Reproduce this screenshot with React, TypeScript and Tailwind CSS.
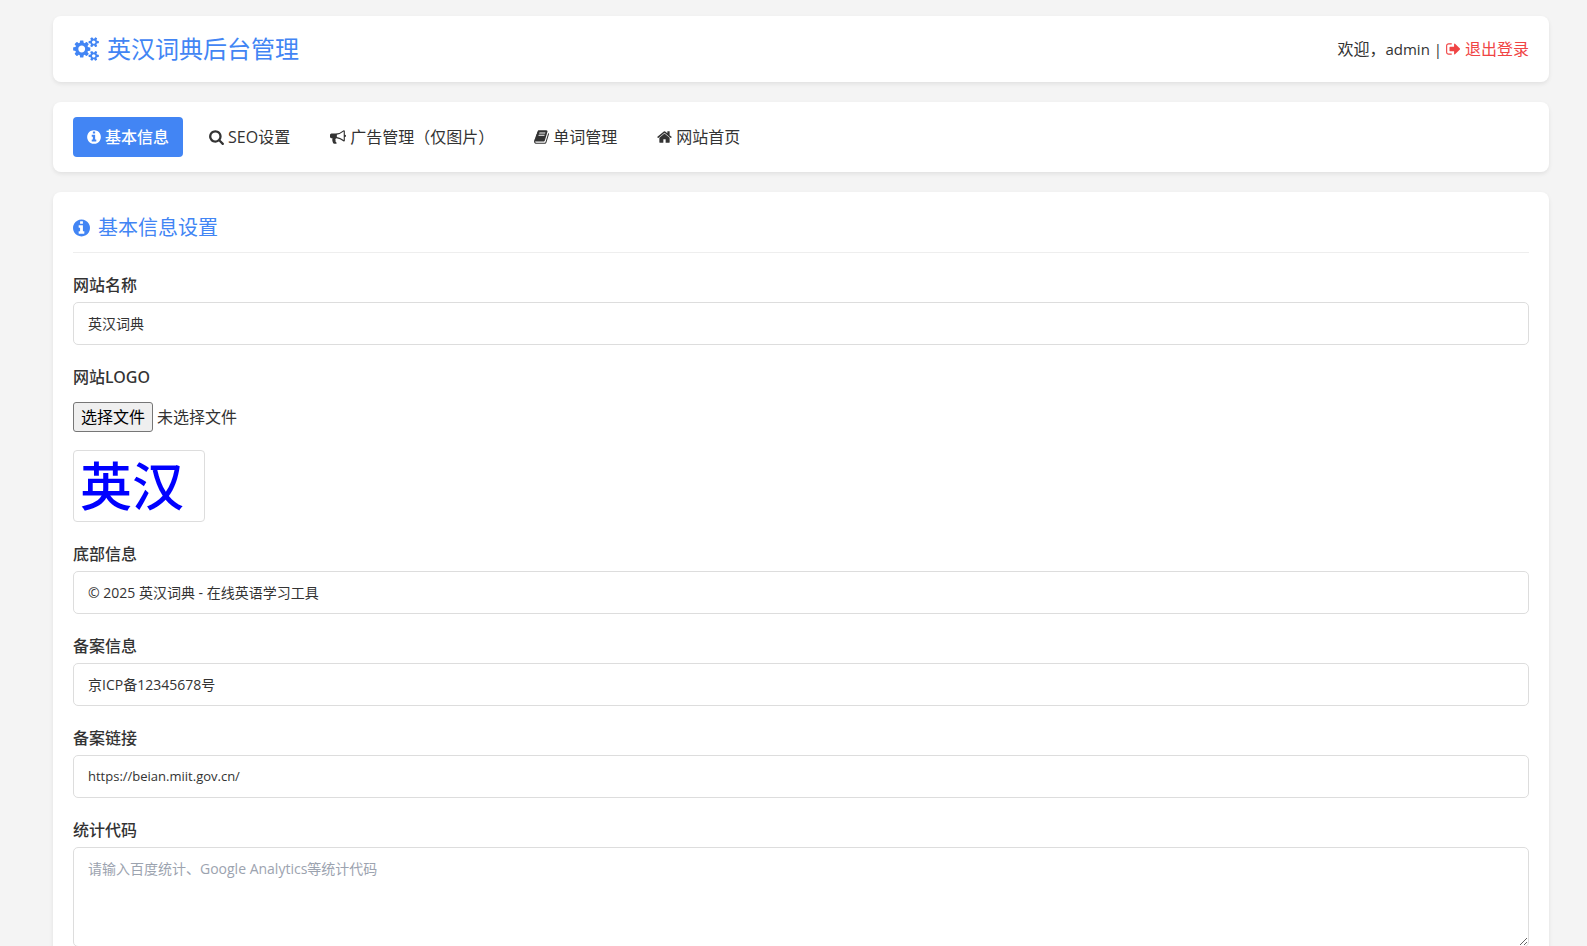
import React, { useState } from 'react';

interface IconProps {
  name: keyof typeof ICONS;
  className: string;
}

const ICONS = {
  cogs: {
    viewBox: '-64 0 1920 1792',
    path: 'M832 896q0-106-75-181t-181-75-181 75-75 181 75 181 181 75 181-75 75-181zm768 512q0-52-38-90t-90-38-90 38-38 90q0 53 37.5 90.5t90.5 37.5 90.5-37.5 37.5-90.5zm0-1024q0-52-38-90t-90-38-90 38-38 90q0 53 37.5 90.5t90.5 37.5 90.5-37.5 37.5-90.5zm-384 421v185q0 10-7 19.5t-16 10.5l-155 24q-11 35-32 76 34 48 90 115 7 11 7 20 0 12-7 19-23 30-82.5 89.5t-78.5 59.5q-11 0-21-7l-115-90q-37 19-77 31-11 108-23 155-7 24-30 24h-186q-11 0-20-7.5t-10-17.5l-23-153q-34-10-75-31l-118 89q-7 7-20 7-11 0-21-8-144-133-144-160 0-9 7-19 10-14 41-53t47-61q-23-44-35-82l-152-24q-10-1-17-9.5t-7-19.5v-185q0-10 7-19.5t16-10.5l155-24q11-35 32-76-34-48-90-115-7-11-7-20 0-12 7-20 22-30 82-89t79-59q11 0 21 7l115 90q34-18 77-32 11-108 23-154 7-24 30-24h186q11 0 20 7.5t10 17.5l23 153q34 10 75 31l118-89q8-7 20-7 11 0 21 8 144 133 144 160 0 8-7 19-12 16-42 54t-45 60q23 48 34 82l152 23q10 2 17 10.5t7 19.5zm640 533v140q0 16-149 31-12 27-30 52 51 113 51 138 0 4-4 7-122 71-124 71-8 0-46-47t-52-68q-20 2-30 2t-30-2q-14 21-52 68t-46 47q-2 0-124-71-4-3-4-7 0-25 51-138-18-25-30-52-149-15-149-31v-140q0-16 149-31 13-29 30-52-51-113-51-138 0-4 4-7 4-2 35-20t59-34 30-16q8 0 46 46.5t52 67.5q20-2 30-2t30 2q51-71 92-112l6-2q4 0 124 70 4 3 4 7 0 25-51 138 17 23 30 52 149 15 149 31zm0-1024v140q0 16-149 31-12 27-30 52 51 113 51 138 0 4-4 7-122 71-124 71-8 0-46-47t-52-68q-20 2-30 2t-30-2q-14 21-52 68t-46 47q-2 0-124-71-4-3-4-7 0-25 51-138-18-25-30-52-149-15-149-31v-140q0-16 149-31 13-29 30-52-51-113-51-138 0-4 4-7 4-2 35-20t59-34 30-16q8 0 46 46.5t52 67.5q20-2 30-2t30 2q51-71 92-112l6-2q4 0 124 70 4 3 4 7 0 25-51 138 17 23 30 52 149 15 149 31z',
  },
  info: {
    viewBox: '128 0 1536 1792',
    path: 'M1152 1376v-160q0-14-9-23t-23-9h-96v-512q0-14-9-23t-23-9h-320q-14 0-23 9t-9 23v160q0 14 9 23t23 9h96v320h-96q-14 0-23 9t-9 23v160q0 14 9 23t23 9h448q14 0 23-9t9-23zm-128-896v-160q0-14-9-23t-23-9h-192q-14 0-23 9t-9 23v160q0 14 9 23t23 9h192q14 0 23-9t9-23zm640 416q0 209-103 385.5t-279.5 279.5-385.5 103-385.5-103-279.5-279.5-103-385.5 103-385.5 279.5-279.5 385.5-103 385.5 103 279.5 279.5 103 385.5z',
  },
  search: {
    viewBox: '64 0 1664 1792',
    path: 'M1216 832q0-185-131.5-316.5t-316.5-131.5-316.5 131.5-131.5 316.5 131.5 316.5 316.5 131.5 316.5-131.5 131.5-316.5zm512 832q0 52-38 90t-90 38q-54 0-90-38l-343-342q-179 124-399 124-143 0-273.5-55.5t-225-150-150-225-55.5-273.5 55.5-273.5 150-225 225-150 273.5-55.5 273.5 55.5 225 150 150 225 55.5 273.5q0 220-124 399l343 343q37 37 37 90z',
  },
  bullhorn: {
    viewBox: '0 0 1792 1792',
    path: 'M1664 640q53 0 90.5 37.5t37.5 90.5-37.5 90.5-90.5 37.5v384q0 52-38 90t-90 38q-417-347-812-380-58 19-91 66t-31 100.5 40 92.5q-20 33-23 65.5t6 58 33.5 55 48 50 61.5 50.5q-29 58-111.5 83t-168.5 11.5-132-55.5q-7-23-29.5-87.5t-32-94.5-23-89-15-101 3.5-98.5 22-110.5h-122q-66 0-113-47t-47-113v-192q0-66 47-113t113-47h480q435 0 896-384 52 0 90 38t38 90v384zm-128 604v-954q-394 302-768 343v270q377 42 768 341z',
  },
  book: {
    viewBox: '64 0 1664 1792',
    path: 'M1703 478q40 57 18 129l-275 906q-19 64-76.5 107.5t-122.5 43.5h-923q-77 0-148.5-53.5t-99.5-131.5q-24-67-2-127 0-4 3-27t4-37q1-8-3-21.5t-3-19.5q2-11 8-21t16.5-23.5 16.5-23.5q23-38 45-91.5t30-91.5q3-10 .5-30t-.5-28q3-11 17-28t17-23q21-36 42-92t25-90q1-9-2.5-32t.5-28q4-13 22-30.5t22-22.5q19-26 42.5-84.5t27.5-96.5q1-8-3-25.5t-2-26.5q2-8 9-18t18-23 17-21q8-12 16.5-30.5t15-35 16-36 19.5-32 26.5-23.5 36-11.5 47.5 5.5l-1 3q38-9 51-9h761q74 0 114 56t18 130l-274 906q-36 119-71.5 153.5t-128.5 34.5h-869q-27 0-38 15-11 16-1 43 24 70 144 70h923q29 0 56-15.5t35-41.5l300-987q7-22 5-57 38 15 59 43zm-1064 2q-4 13 2 22.5t20 9.5h608q13 0 25.5-9.5t16.5-22.5l21-64q4-13-2-22.5t-20-9.5h-608q-13 0-25.5 9.5t-16.5 22.5zm-83 256q-4 13 2 22.5t20 9.5h608q13 0 25.5-9.5t16.5-22.5l21-64q4-13-2-22.5t-20-9.5h-608q-13 0-25.5 9.5t-16.5 22.5z',
  },
  home: {
    viewBox: '64 0 1664 1792',
    path: 'M1472 992v480q0 26-19 45t-45 19h-384v-384h-256v384h-384q-26 0-45-19t-19-45v-480q0-1 .5-3t.5-3l575-474 575 474q1 2 1 6zm223-69l-62 74q-8 9-21 11h-3q-13 0-21-7l-692-577-692 577q-12 8-24 7-13-2-21-11l-62-74q-8-10-7-23.5t11-21.5l719-599q32-26 76-26t76 26l244 204v-195q0-14 9-23t23-9h192q14 0 23 9t9 23v408l219 182q10 8 11 21.5t-7 23.5z',
  },
  signOut: {
    viewBox: '64 0 1664 1792',
    path: 'M704 1440q0 4 1 20t.5 26.5-3 23.5-10 19.5-20.5 6.5h-320q-119 0-203.5-84.5t-84.5-203.5v-704q0-119 84.5-203.5t203.5-84.5h320q13 0 22.5 9.5t9.5 22.5q0 4 1 20t.5 26.5-3 23.5-10 19.5-20.5 6.5h-320q-66 0-113 47t-47 113v704q0 66 47 113t113 47h312l11.5 1 11.5 3 8 5.5 7 9 2 13.5zm928-544q0 26-19 45l-544 544q-19 19-45 19t-45-19-19-45v-288h-448q-26 0-45-19t-19-45v-384q0-26 19-45t45-19h448v-288q0-26 19-45t45-19 45 19l544 544q19 19 19 45z',
  },
};

const Icon: React.FC<IconProps> = ({ name, className }) => (
  <svg viewBox={ICONS[name].viewBox} fill="currentColor" aria-hidden="true" className={`shrink-0 ${className}`}>
    <path d={ICONS[name].path} />
  </svg>
);

const TABS = [
  { id: 'basic', label: '基本信息', icon: 'info', iconClass: 'h-4 w-[14px]' },
  { id: 'seo', label: 'SEO设置', icon: 'search', iconClass: 'h-4 w-[15px]' },
  { id: 'ads', label: '广告管理（仅图片）', icon: 'bullhorn', iconClass: 'h-4 w-4' },
  { id: 'words', label: '单词管理', icon: 'book', iconClass: 'h-4 w-[15px]' },
  { id: 'home', label: '网站首页', icon: 'home', iconClass: 'h-4 w-[15px]' },
] as const;

const cardClass = 'rounded-lg bg-white px-5 shadow-[0_2px_4px_rgba(0,0,0,0.08)]';
const labelClass = "mb-[5px] block font-['Noto_Sans','Noto_Sans_CJK_SC',sans-serif] font-medium";
const fieldClass =
  'block w-full rounded-[5px] border border-[#ddd] px-[14px] py-[10px] leading-[21px] focus:border-[#4285f4] focus:outline-none';

interface FieldProps {
  id: string;
  label: string;
  value: string;
  type?: string;
  onChange: (value: string) => void;
}

const Field: React.FC<FieldProps> = ({ id, label, value, type = 'text', onChange }) => (
  <div>
    <label htmlFor={id} className={labelClass}>
      {label}
    </label>
    <input
      id={id}
      name={id}
      type={type}
      value={value}
      onChange={(e) => onChange(e.target.value)}
      className={`${fieldClass} ${type === 'url' ? 'text-[13px]' : 'text-[14px]'}`}
    />
  </div>
);

const App: React.FC = () => {
  const [activeTab, setActiveTab] = useState<string>('basic');
  const [fileName, setFileName] = useState('');
  const [form, setForm] = useState({
    siteName: '英汉词典',
    footer: '© 2025 英汉词典 - 在线英语学习工具',
    icp: '京ICP备12345678号',
    icpLink: 'https://beian.miit.gov.cn/',
    analytics: '',
  });

  const update = (key: keyof typeof form) => (value: string) => setForm({ ...form, [key]: value });

  return (
    <div className="min-h-screen bg-[#f4f4f4] pt-4 pr-[38px] pb-5 pl-[53px] font-['Open_Sans','Noto_Sans_CJK_SC',sans-serif] text-base leading-6 text-[#333]">
      <div className="flex flex-col gap-5">
        <header className={`${cardClass} flex items-center justify-between py-[15px]`}>
          <h1 className="flex items-center gap-2 text-2xl leading-9 text-[#4285f4]">
            <Icon name="cogs" className="h-6 w-[26px]" />
            英汉词典后台管理
          </h1>
          <div className="flex items-center gap-1">
            <span>
              欢迎，<span className="text-[15px]">admin |</span>
            </span>
            <a href="#logout" className="flex items-center gap-1 text-[#f04444]">
              <Icon name="signOut" className="h-4 w-[15px]" />
              退出登录
            </a>
          </div>
        </header>

        <nav className={`${cardClass} flex gap-3 py-[15px]`}>
          {TABS.map((tab) => (
            <button
              key={tab.id}
              type="button"
              onClick={() => setActiveTab(tab.id)}
              className={`flex items-center gap-1 rounded px-[14px] py-2 ${
                activeTab === tab.id ? 'bg-[#4285f4] font-medium text-white' : 'hover:bg-gray-100'
              }`}
            >
              <Icon name={tab.icon} className={tab.iconClass} />
              {tab.label}
            </button>
          ))}
        </nav>

        <main className={`${cardClass} py-5`}>
          <h2 className="mb-5 flex items-center gap-2 border-b border-[#eee] pb-2 text-xl leading-8 text-[#4285f4]">
            <Icon name="info" className="h-5 w-[17px]" />
            基本信息设置
          </h2>

          <form className="flex flex-col gap-5" onSubmit={(e) => e.preventDefault()}>
            <Field id="siteName" label="网站名称" value={form.siteName} onChange={update('siteName')} />

            <div>
              <label htmlFor="logo" className={labelClass}>
                网站LOGO
              </label>
              <div className="flex items-center gap-1 pt-2">
                <input
                  id="logo"
                  type="file"
                  accept="image/*"
                  className="sr-only"
                  onChange={(e) => setFileName(e.target.files?.[0]?.name ?? '')}
                />
                <label
                  htmlFor="logo"
                  className="rounded-[3px] border border-[#767676] bg-[#efefef] px-[7px] py-[2px] text-black"
                >
                  选择文件
                </label>
                <span>{fileName || '未选择文件'}</span>
              </div>
              <div className="mt-[18px] w-fit rounded border border-[#ddd] p-[5px]">
                <svg
                  viewBox="0 0 120 60"
                  role="img"
                  aria-label="英汉"
                  className="h-[60px] w-[120px] overflow-visible font-['Noto_Sans_CJK_SC',sans-serif]"
                >
                  <text x="1" y="50" fontSize="52" fontWeight="500" fill="#0000ff">
                    英汉
                  </text>
                </svg>
              </div>
            </div>

            <Field id="footer" label="底部信息" value={form.footer} onChange={update('footer')} />
            <Field id="icp" label="备案信息" value={form.icp} onChange={update('icp')} />
            <Field id="icpLink" label="备案链接" type="url" value={form.icpLink} onChange={update('icpLink')} />

            <div>
              <label htmlFor="analytics" className={labelClass}>
                统计代码
              </label>
              <textarea
                id="analytics"
                name="analytics"
                placeholder="请输入百度统计、Google Analytics等统计代码"
                value={form.analytics}
                onChange={(e) => update('analytics')(e.target.value)}
                className={`${fieldClass} h-[100px] resize-y text-[14px] placeholder:text-[#9ca3af]`}
              />
            </div>
          </form>
        </main>
      </div>
    </div>
  );
};

export default App;
